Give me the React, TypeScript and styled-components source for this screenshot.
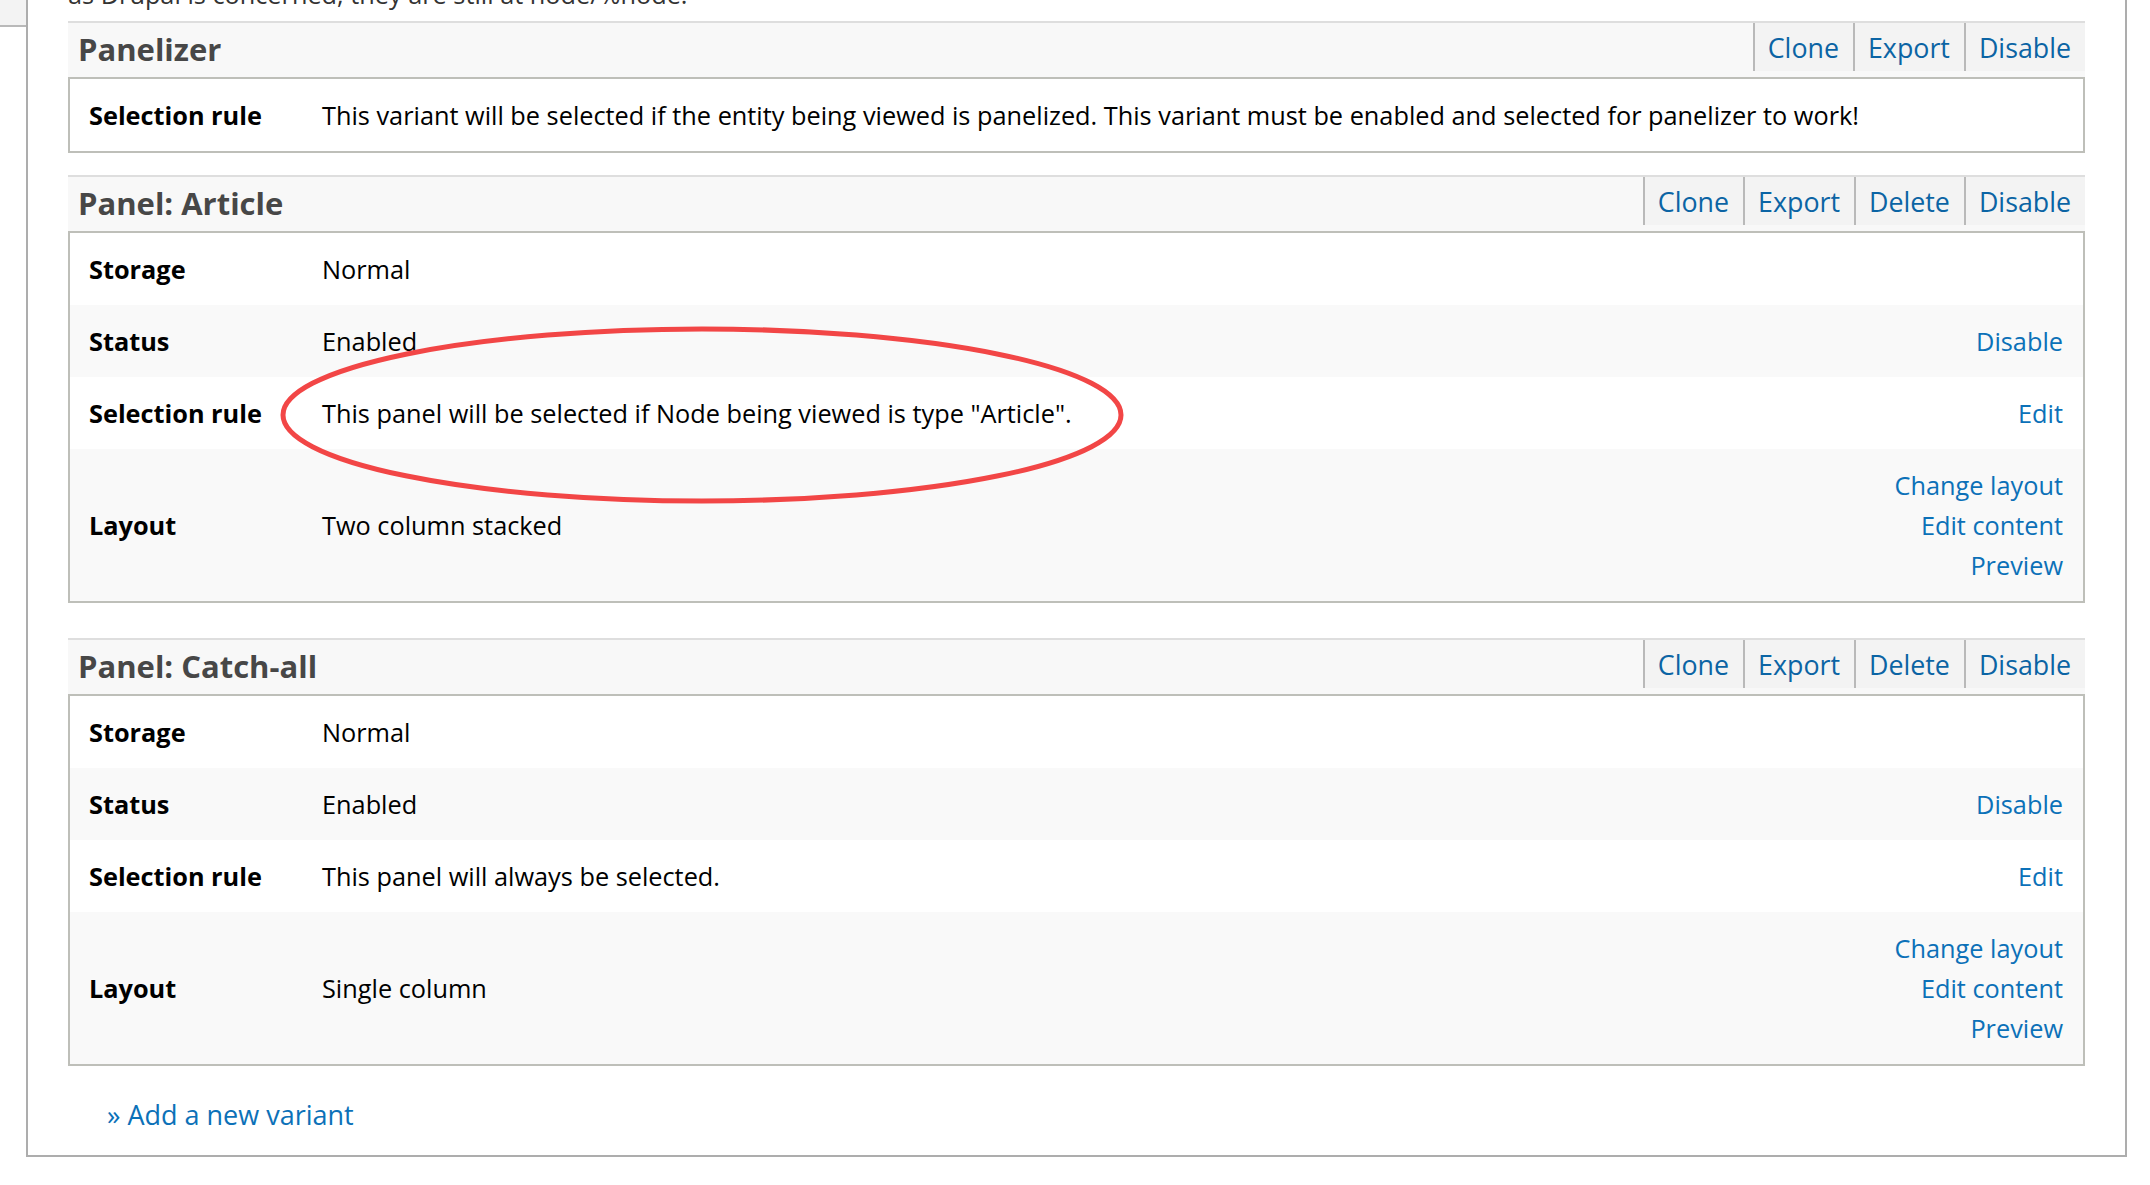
import React from 'react'
import styled, { createGlobalStyle } from 'styled-components'

const GlobalStyle = createGlobalStyle`
  html, body {
    margin: 0;
    padding: 0;
    background: #fff;
  }
  body {
    font-family: 'Open Sans', 'DejaVu Sans', sans-serif;
    font-size: 25.3px;
    color: #111;
  }
`

const Page = styled.div`
  display: flex;
  width: 2150px;
  height: 1185px;
  overflow: hidden;
  align-items: flex-start;
`

const TabColumn = styled.div`
  width: 26px;
  flex: none;
`

const TabStub = styled.div`
  height: 25px;
  background: #f3f3f3;
  border-bottom: 2px solid #b9b9b9;
`

const Pane = styled.div`
  position: relative;
  width: 2101px;
  flex: none;
  border: 2px solid #adadad;
  border-top: none;
  padding: 0 40px 20px 40px;
  box-sizing: border-box;
`

const Intro = styled.p`
  margin: -26px 0 7px;
  line-height: 40px;
  color: #333;
`

const Panel = styled.section<{ $gap: number }>`
  margin-bottom: ${(p) => p.$gap}px;
`

const Header = styled.div`
  display: flex;
  align-items: stretch;
  height: 54px;
  border-top: 2px solid #dedede;
  background: #f8f8f8;
`

const Title = styled.h2`
  flex: 1;
  margin: 0;
  padding: 0 0 2px 10px;
  display: flex;
  align-items: center;
  font-size: 31px;
  font-weight: 700;
  color: #474747;
`

const ButtonLink = styled.a`
  display: flex;
  align-items: center;
  margin-bottom: 6px;
  padding: 0 14px 0 13px;
  border-left: 2px solid #b9b9b9;
  background: #f3f3f3;
  font-size: 26.8px;
  color: #0b64a4;
  text-decoration: none;
`

const Body = styled.div`
  border: 2px solid #bebfb9;
`

const Row = styled.div<{ $shade: boolean }>`
  display: grid;
  grid-template-columns: 233px 1fr auto;
  align-items: center;
  padding: 16px 20px 16px 19px;
  line-height: 40px;
  background: ${(p) => (p.$shade ? '#f9f9f9' : '#fff')};
`

const Label = styled.div`
  font-weight: 700;
  color: #000;
`

const Value = styled.div`
  color: #000;
`

const Actions = styled.div`
  display: flex;
  flex-direction: column;
  align-items: flex-end;
`

const ActionLink = styled.a`
  color: #0c71b8;
  text-decoration: none;
`

const AddLink = styled.a`
  display: block;
  margin: 29px 0 0 39px;
  font-size: 27px;
  line-height: 40px;
  color: #0c71b8;
  text-decoration: none;
`

const Annotation = styled.svg`
  position: absolute;
  left: 250px;
  top: 321px;
  pointer-events: none;
`

interface VariantRow {
  label: string
  value: string
  actions?: string[]
}

interface Variant {
  title: string
  buttons: string[]
  rows: VariantRow[]
  gap: number
}

const variants: Variant[] = [
  {
    title: 'Panelizer',
    buttons: ['Clone', 'Export', 'Disable'],
    gap: 22,
    rows: [
      {
        label: 'Selection rule',
        value:
          'This variant will be selected if the entity being viewed is panelized. This variant must be enabled and selected for panelizer to work!',
      },
    ],
  },
  {
    title: 'Panel: Article',
    buttons: ['Clone', 'Export', 'Delete', 'Disable'],
    gap: 35,
    rows: [
      { label: 'Storage', value: 'Normal' },
      { label: 'Status', value: 'Enabled', actions: ['Disable'] },
      { label: 'Selection rule', value: 'This panel will be selected if Node being viewed is type "Article".', actions: ['Edit'] },
      { label: 'Layout', value: 'Two column stacked', actions: ['Change layout', 'Edit content', 'Preview'] },
    ],
  },
  {
    title: 'Panel: Catch-all',
    buttons: ['Clone', 'Export', 'Delete', 'Disable'],
    gap: 0,
    rows: [
      { label: 'Storage', value: 'Normal' },
      { label: 'Status', value: 'Enabled', actions: ['Disable'] },
      { label: 'Selection rule', value: 'This panel will always be selected.', actions: ['Edit'] },
      { label: 'Layout', value: 'Single column', actions: ['Change layout', 'Edit content', 'Preview'] },
    ],
  },
]

const App: React.FunctionComponent = () => {
  return (
    <Page>
      <GlobalStyle />
      <TabColumn>
        <TabStub />
      </TabColumn>
      <Pane>
        <Intro>as Drupal is concerned, they are still at node/%node.</Intro>
        {variants.map((v) => (
          <Panel key={v.title} $gap={v.gap}>
            <Header>
              <Title>{v.title}</Title>
              {v.buttons.map((b) => (
                <ButtonLink key={b} href="#">
                  {b}
                </ButtonLink>
              ))}
            </Header>
            <Body>
              {v.rows.map((r, i) => (
                <Row key={r.label} $shade={i % 2 === 1}>
                  <Label>{r.label}</Label>
                  <Value>{r.value}</Value>
                  <Actions>
                    {(r.actions || []).map((a) => (
                      <ActionLink key={a} href="#">
                        {a}
                      </ActionLink>
                    ))}
                  </Actions>
                </Row>
              ))}
            </Body>
          </Panel>
        ))}
        <AddLink href="#">» Add a new variant</AddLink>
        {/* red hand-drawn circle around the selection rule */}
        <Annotation width="852" height="188" viewBox="0 0 852 188">
          <ellipse cx="424" cy="94" rx="419" ry="86" fill="none" stroke="#f24646" strokeWidth="5" />
        </Annotation>
      </Pane>
    </Page>
  )
}

export default App
